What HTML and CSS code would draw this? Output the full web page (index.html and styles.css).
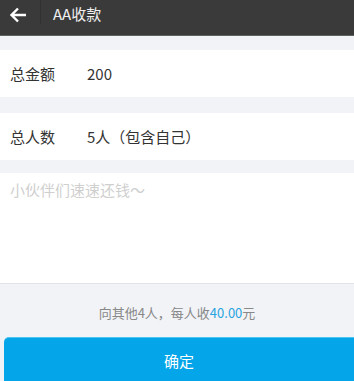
FILE: index.html
```html
<!DOCTYPE html>
<html>
<head>
    <title>AA收款</title>
    <link rel="stylesheet" href="styles.css">
</head>
<body>
    <div id="page">
        <div class="topbar">
            <div class="back">
                <svg width="18" height="16" viewBox="0 0 18 16">
                    <path d="M17 8H2.5M9 1.5L2.5 8L9 14.5" fill="none" stroke="#fff" stroke-width="2.4"/>
                </svg>
            </div>
            <div class="title">AA收款</div>
        </div>

        <div class="row first">
            <span class="label">总金额</span>
            <span class="value">200</span>
        </div>
        <div class="row second">
            <span class="label">总人数</span>
            <span class="value">5人（包含自己）</span>
        </div>

        <textarea class="note" placeholder="小伙伴们速速还钱～"></textarea>

        <div class="summary">向其他4人，每人收<span class="money">40.00</span>元</div>

        <div class="confirm">确定</div>
    </div>
</body>
</html>
```

FILE: styles.css
```css
* {
    margin: 0;
    padding: 0;
    box-sizing: border-box;
}

body {
    background: #f2f3f7;
    font-family: "Noto Sans CJK SC", "Liberation Sans", sans-serif;
    overflow: hidden;
}

#page {
    width: 354px;
    height: 381px;
    overflow: hidden;
}

.topbar {
    display: flex;
    height: 36px;
    background: #3a3a3a;
    border-bottom: 1px solid #5c625d;
}

.back {
    width: 41px;
    height: 24px;
    padding: 7px 0 0 9px;
    border-right: 1px solid #313131;
}

.back svg {
    display: block;
}

.title {
    margin-left: 12px;
    line-height: 27px;
    font-size: 15px;
    color: #f0f0f0;
}

.row {
    display: flex;
    align-items: center;
    height: 47px;
    padding-left: 10px;
    background: #fff;
    font-size: 15px;
    color: #333;
}

.row.first { margin-top: 14px; }
.row.second { margin-top: 16px; }

.label {
    width: 77px;
}

.note {
    display: block;
    width: 100%;
    height: 111px;
    margin-top: 13px;
    padding: 7px 10px;
    border: none;
    border-bottom: 1px solid #e2e3e7;
    background: #fff;
    resize: none;
    outline: none;
    font-family: "Noto Sans CJK SC", "Liberation Sans", sans-serif;
    font-size: 15px;
    line-height: 20px;
    color: #333;
}

.note::placeholder {
    color: #cfcfcf;
}

.summary {
    padding-top: 19px;
    line-height: 20px;
    text-align: center;
    font-size: 13px;
    color: #888;
}

.money {
    color: #2aa4e0;
}

.confirm {
    height: 47px;
    margin: 14px 0 0 4px;
    background: #05a6e9;
    border-top: 1px solid #4cc3f0;
    border-radius: 5px 0 0 0;
    color: #fff;
    font-size: 15px;
    line-height: 45px;
    text-align: center;
}
```
